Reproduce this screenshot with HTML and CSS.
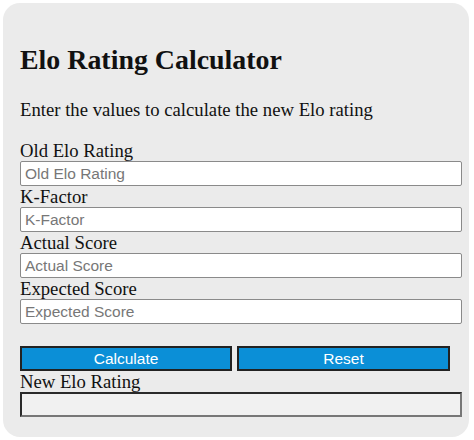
FILE: index.html
```html
<!DOCTYPE html>
<html lang="en">
<head>
<meta charset="utf-8">
<title>Elo Rating Calculator</title>
<link rel="stylesheet" href="styles.css">
</head>
<body>
<div class="card">
  <h1 class="title">Elo Rating Calculator</h1>
  <p class="intro">Enter the values to calculate the new Elo rating</p>
  <div class="fields">
    <label class="label" for="old">Old Elo Rating</label>
    <input class="field" id="old" type="text" placeholder="Old Elo Rating">
    <label class="label" for="k">K-Factor</label>
    <input class="field" id="k" type="text" placeholder="K-Factor">
    <label class="label" for="actual">Actual Score</label>
    <input class="field" id="actual" type="text" placeholder="Actual Score">
    <label class="label" for="expected">Expected Score</label>
    <input class="field" id="expected" type="text" placeholder="Expected Score">
  </div>
  <div class="actions">
    <button class="btn" type="button">Calculate</button>
    <button class="btn" type="button">Reset</button>
  </div>
  <div class="label">New Elo Rating</div>
  <div class="result"></div>
</div>
</body>
</html>
```
FILE: styles.css
```css
html, body {
  margin: 0;
  padding: 0;
  background: #ffffff;
}

body {
  padding: 3px;
  font-family: "Liberation Serif", "Times New Roman", serif;
  color: #111111;
}

.card {
  width: 442px;
  height: 393px;
  padding: 41px 7px 0 17px;
  background: #ebebeb;
  border-radius: 17px;
}

.title {
  margin: 0;
  font-size: 27.9px;
  line-height: 32px;
  font-weight: bold;
}

.intro {
  margin: 23px 0 20px 0;
  font-size: 18.7px;
  line-height: 21px;
}

.fields {
  display: flex;
  flex-direction: column;
}

.label {
  display: block;
  font-size: 18.7px;
  line-height: 21px;
}

.field {
  box-sizing: border-box;
  width: 442px;
  height: 25px;
  margin: 0;
  padding: 0 4px;
  border: 1px solid #8a8a8a;
  border-radius: 2px;
  background: #ffffff;
  font-family: "Liberation Sans", Arial, sans-serif;
  font-size: 15.5px;
  color: #222222;
}

.field::placeholder {
  color: #777777;
}

.actions {
  display: flex;
  gap: 5px;
  margin-top: 22px;
}

.btn {
  box-sizing: border-box;
  width: 212px;
  height: 25px;
  margin: 0;
  padding: 0;
  border: 2px solid #222222;
  background: #0b8fd7;
  color: #ffffff;
  font-family: "Liberation Sans", Arial, sans-serif;
  font-size: 15.5px;
  line-height: 21px;
}

.btn + .btn {
  width: 213px;
}

.result {
  box-sizing: border-box;
  width: 442px;
  height: 25px;
  border-style: solid;
  border-width: 2px;
  border-color: #2a2a2a #777777 #777777 #2a2a2a;
  background: #f1f1f1;
}
```
